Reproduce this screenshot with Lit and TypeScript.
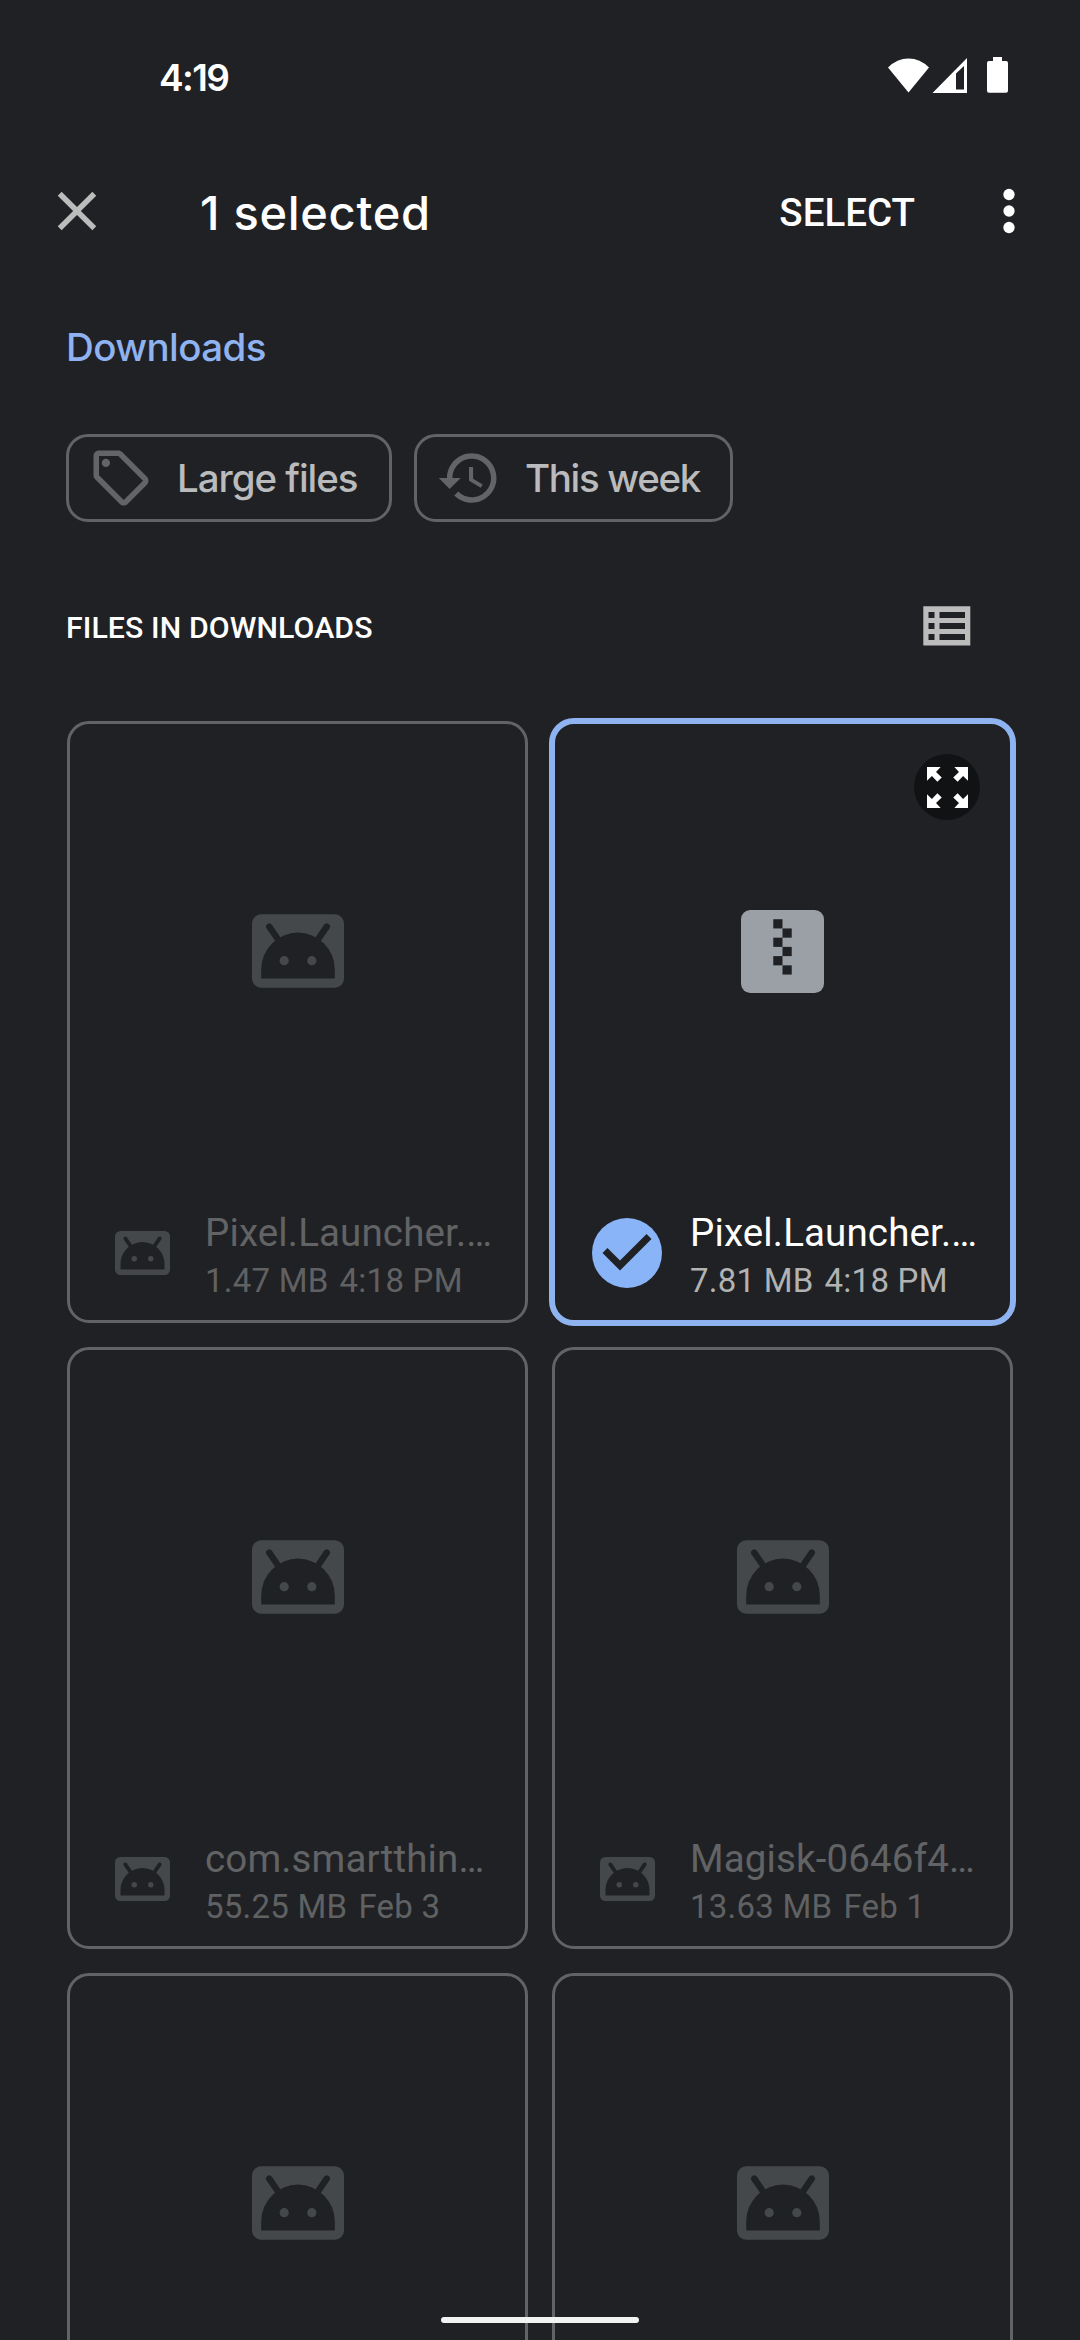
import { LitElement, html, css, svg, nothing } from "lit";
import { customElement, property } from "lit/decorators.js";

interface FileItem {
  name: string;
  size: string;
  date: string;
  kind: "apk" | "zip";
  selected?: boolean;
}

const FILES: FileItem[] = [
  { name: "Pixel.Launcher.…", size: "1.47 MB", date: "4:18 PM", kind: "apk" },
  { name: "Pixel.Launcher.…", size: "7.81 MB", date: "4:18 PM", kind: "zip", selected: true },
  { name: "com.smartthin…", size: "55.25 MB", date: "Feb 3", kind: "apk" },
  { name: "Magisk-0646f4…", size: "13.63 MB", date: "Feb 1", kind: "apk" },
  { name: "", size: "", date: "", kind: "apk" },
  { name: "", size: "", date: "", kind: "apk" },
];

const android = (cls: string) => html`
  <svg class=${cls} viewBox="0 0 20 16">
    <rect class="plate" width="20" height="16" rx="2"></rect>
    <path class="hole" d="M2 14v-2a8 8 0 0 1 16 0v2z"></path>
    <path class="antenna" d="M3.75 2.7 6 6M16.25 2.7 14 6"></path>
    <circle class="plate" cx="7" cy="10.1" r="1"></circle>
    <circle class="plate" cx="13" cy="10.1" r="1"></circle>
  </svg>`;

const ZIP_TEETH = [0, 1, 2, 3, 4, 5];

const zip = html`
  <svg class="zip" viewBox="0 0 18 18">
    <rect width="18" height="18" rx="2" fill="#9aa0a6"></rect>
    ${ZIP_TEETH.map(
      (i) => svg`<rect x=${i % 2 ? 9 : 7} y=${2 + i * 2} width="2" height="2" fill="#202124"></rect>`
    )}
  </svg>`;

@customElement("file-card")
export class FileCard extends LitElement {
  @property({ attribute: false }) file!: FileItem;

  static styles = css`
    :host {
      display: block;
      height: 602px;
    }
    .card {
      box-sizing: border-box;
      position: relative;
      height: 602px;
      border: 3px solid #626366;
      border-radius: 22px;
      display: flex;
      flex-direction: column;
    }
    .card.selected {
      height: 608px;
      margin: -3px;
      border: 6px solid #8fb3f0;
      border-radius: 25px;
    }
    .thumb {
      height: 454px;
      display: flex;
      align-items: center;
      justify-content: center;
    }
    .big {
      width: 92px;
      height: 74px;
    }
    .small {
      width: 55px;
      height: 44px;
    }
    .plate {
      fill: #45484b;
    }
    .hole {
      fill: #202124;
    }
    .antenna {
      stroke: #202124;
      stroke-width: 1.4;
      stroke-linecap: round;
      fill: none;
    }
    .zip {
      width: 83px;
      height: 83px;
    }
    .meta {
      display: flex;
      gap: 28px;
      padding: 30px 30px 0 37px;
    }
    .icon {
      width: 70px;
      height: 70px;
      margin-top: 10px;
      display: flex;
      align-items: center;
      justify-content: center;
      flex: none;
    }
    .name {
      font-size: 38.5px;
      line-height: 50px;
      color: #626364;
      white-space: nowrap;
      letter-spacing: 0.14px;
    }
    .info {
      font-size: 33px;
      line-height: 46px;
      color: #606163;
      white-space: nowrap;
      display: flex;
      gap: 11px;
      letter-spacing: 0.24px;
    }
    .selected .name {
      color: #ffffff;
    }
    .selected .info {
      color: #b1b2b3;
    }
    .check {
      width: 70px;
      height: 70px;
    }
    .expand {
      position: absolute;
      top: 30px;
      right: 30px;
      width: 66px;
      height: 66px;
      border-radius: 50%;
      background: #111214;
      display: flex;
      align-items: center;
      justify-content: center;
    }
    .expand svg {
      width: 41px;
      height: 41px;
    }
  `;

  render() {
    const f = this.file;
    const arrow = "M0 0H5L3.3 1.8 5.4 3.8 3.8 5.4 1.8 3.3 0 5z";
    return html`
      <div class="card ${f.selected ? "selected" : ""}">
        <div class="thumb">${f.kind === "zip" ? zip : android("big")}</div>
        ${f.name
          ? html`<div class="meta">
              <div class="icon">
                ${f.selected
                  ? html`<svg class="check" viewBox="2 2 20 20">
                      <circle cx="12" cy="12" r="10" fill="#8ab4f8"></circle>
                      <path d="M10 17l-5-5 1.41-1.41L10 14.17l7.59-7.59L19 8z" fill="#202124"></path>
                    </svg>`
                  : android("small")}
              </div>
              <div>
                <div class="name">${f.name}</div>
                <div class="info"><span>${f.size}</span><span>${f.date}</span></div>
              </div>
            </div>`
          : nothing}
        ${f.selected
          ? html`<div class="expand">
              <svg viewBox="0 0 15 15" fill="#fff">
                <path d=${arrow}></path>
                <path d=${arrow} transform="translate(15 0) scale(-1 1)"></path>
                <path d=${arrow} transform="translate(0 15) scale(1 -1)"></path>
                <path d=${arrow} transform="translate(15 15) scale(-1 -1)"></path>
              </svg>
            </div>`
          : nothing}
      </div>
    `;
  }
}

@customElement("app-root")
export class AppRoot extends LitElement {
  static styles = css`
    :host {
      display: block;
      position: relative;
      box-sizing: border-box;
      width: 1080px;
      height: 2340px;
      overflow: hidden;
      background: #202124;
      color: #fff;
      font-family: Roboto, "Liberation Sans", sans-serif;
    }
    .status {
      height: 136px;
      box-sizing: border-box;
      padding: 54px 71px 0 159px;
      display: flex;
      justify-content: space-between;
      align-items: flex-start;
    }
    .clock {
      margin-top: 1px;
      font: 600 37px/46px Inter, sans-serif;
      letter-spacing: -1.6px;
    }
    .status-icons {
      width: 122px;
      height: 38px;
      margin-top: 2px;
    }
    .toolbar {
      height: 150px;
      display: flex;
      align-items: center;
      padding: 0 38px 0 44px;
    }
    .close {
      width: 66px;
      height: 66px;
    }
    .title {
      margin-left: 90px;
      padding-top: 3px;
      flex: 1;
      font: 500 47px/60px Inter, sans-serif;
      letter-spacing: 0.7px;
    }
    .select {
      padding-top: 3px;
      font-size: 38.5px;
      line-height: 50px;
      font-weight: 500;
    }
    .more {
      width: 66px;
      height: 66px;
      margin-left: 61px;
    }
    .crumb {
      padding-left: 66px;
      height: 148px;
      font: 500 38.5px/122px Inter, sans-serif;
      letter-spacing: -0.6px;
      color: #8fb3f0;
    }
    .chips {
      display: flex;
      gap: 22px;
      padding-left: 66px;
    }
    .chip {
      box-sizing: border-box;
      height: 88px;
      border: 3px solid #626366;
      border-radius: 22px;
      display: flex;
      align-items: center;
      gap: 23px;
      padding-left: 19px;
      color: #babbbc;
      font: 500 38.5px/50px Inter, sans-serif;
      white-space: nowrap;
    }
    .chip svg {
      width: 66px;
      height: 66px;
      fill: #636467;
    }
    .large {
      width: 326px;
      letter-spacing: -1.05px;
    }
    .week {
      width: 319px;
      letter-spacing: -1.35px;
    }
    .section {
      height: 199px;
      box-sizing: border-box;
      padding: 0 109px 0 66px;
      display: flex;
      justify-content: space-between;
      align-items: flex-start;
    }
    .section-title {
      margin-top: 86px;
      font-size: 30.25px;
      line-height: 40px;
      font-weight: 500;
      letter-spacing: 0.1px;
    }
    .list-icon {
      width: 48px;
      height: 40px;
      margin-top: 84px;
    }
    .grid {
      display: grid;
      grid-template-columns: 461px 461px;
      gap: 24px;
      padding-left: 67px;
    }
    .home {
      position: absolute;
      left: 441px;
      top: 2317px;
      width: 198px;
      height: 6px;
      border-radius: 3px;
      background: #f1f2f2;
    }
  `;

  render() {
    return html`
      <div class="status">
        <div class="clock">4:19</div>
        <svg class="status-icons" viewBox="887 56 122 38" fill="#fff">
          <path d="M908.5 92.5 888 67.5Q897 58.5 908.5 58.5T929 67.5z"></path>
          <path
            fill-rule="evenodd"
            d="M932.5 93 967 58v35zM956 73.5V89.5h8V66z"
          ></path>
          <path
            d="M993 57h9v4h4q2 0 2 2v27.7q0 2-2 2h-17q-2 0-2-2V63q0-2 2-2h4z"
          ></path>
        </svg>
      </div>

      <div class="toolbar">
        <svg class="close" viewBox="0 0 24 24" fill="#bcbcbd">
          <path
            d="M19 6.41 17.59 5 12 10.59 6.41 5 5 6.41 10.59 12 5 17.59 6.41 19 12 13.41 17.59 19 19 17.59 13.41 12z"
          ></path>
        </svg>
        <div class="title">1 selected</div>
        <div class="select">SELECT</div>
        <svg class="more" viewBox="0 0 24 24" fill="#fff">
          <circle cx="12" cy="6" r="2.05"></circle>
          <circle cx="12" cy="12" r="2.05"></circle>
          <circle cx="12" cy="18" r="2.05"></circle>
        </svg>
      </div>

      <div class="crumb">Downloads</div>

      <div class="chips">
        <div class="chip large">
          <svg viewBox="0 0 24 24">
            <path
              d="M21.41 11.58l-9-9C12.05 2.22 11.55 2 11 2H4c-1.1 0-2 .9-2 2v7c0 .55.22 1.05.59 1.42l9 9c.36.36.86.58 1.41.58s1.05-.22 1.41-.59l7-7c.37-.36.59-.86.59-1.41s-.23-1.06-.59-1.42zM13 20.01L4 11V4h7v-.01l9 9-7 7.02z"
            ></path>
            <circle cx="6.5" cy="6.5" r="1.5"></circle>
          </svg>
          <span>Large files</span>
        </div>
        <div class="chip week">
          <svg viewBox="0 0 24 24">
            <path
              d="M13 3c-4.97 0-9 4.03-9 9H1l3.89 3.89.07.14L9 12H6c0-3.87 3.13-7 7-7s7 3.13 7 7-3.13 7-7 7c-1.93 0-3.68-.79-4.94-2.06l-1.42 1.42C8.27 19.99 10.51 21 13 21c4.97 0 9-4.03 9-9s-4.03-9-9-9zm-1 5v5l4.28 2.54.72-1.21-3.5-2.08V8H12z"
            ></path>
          </svg>
          <span>This week</span>
        </div>
      </div>

      <div class="section">
        <div class="section-title">FILES IN DOWNLOADS</div>
        <svg class="list-icon" viewBox="923 606 48 40">
          <path
            fill="#bcbcbd"
            fill-rule="evenodd"
            d="M923.3 606.3H970.3V645.6H923.3zM928.5 612v6h6v-6zM939.5 612v6h25.5v-6zM928.5 623v6h6v-6zM939.5 623v6h25.5v-6zM928.5 634v6h6v-6zM939.5 634v6h25.5v-6z"
          ></path>
        </svg>
      </div>

      <div class="grid">${FILES.map((f) => html`<file-card .file=${f}></file-card>`)}</div>

      <div class="home"></div>
    `;
  }
}
